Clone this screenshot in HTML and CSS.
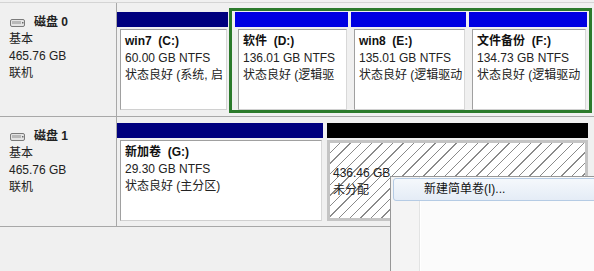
FILE: index.html
```html
<!DOCTYPE html>
<html lang="zh-CN">

<head>
    <meta charset="UTF-8">
    <title>磁盘管理</title>
    <link rel="stylesheet" href="styles.css">
</head>

<body>
    <div class="disk top">
        <div class="info">
            <div class="name">
                <svg class="drive" width="15" height="8" viewBox="0 0 15 8">
                    <rect x="0.5" y="0.5" width="14" height="7" rx="1.5" fill="#e4e4e4" stroke="#7a7a7a"/>
                    <rect x="2" y="2" width="9" height="3" fill="#b8b8b8"/>
                    <rect x="12" y="3" width="1.5" height="1.5" fill="#6a6a6a"/>
                </svg>
                磁盘 0
            </div>
            <div>基本</div>
            <div>465.76 GB</div>
            <div>联机</div>
        </div>
        <div class="parts">
            <div class="part w-c solo">
                <div class="bar navy"></div>
                <div class="box">
                    <b>win7&nbsp; (C:)</b>
                    <div>60.00 GB NTFS</div>
                    <div>状态良好 (系统, 启</div>
                </div>
            </div>
            <div class="selected">
                <div class="part w-d">
                    <div class="bar blue"></div>
                    <div class="box">
                        <b>软件&nbsp; (D:)</b>
                        <div>136.01 GB NTFS</div>
                        <div>状态良好 (逻辑驱</div>
                    </div>
                </div>
                <div class="part w-e">
                    <div class="bar blue"></div>
                    <div class="box">
                        <b>win8&nbsp; (E:)</b>
                        <div>135.01 GB NTFS</div>
                        <div>状态良好 (逻辑驱动</div>
                    </div>
                </div>
                <div class="part w-f">
                    <div class="bar blue"></div>
                    <div class="box">
                        <b>文件备份&nbsp; (F:)</b>
                        <div>134.73 GB NTFS</div>
                        <div>状态良好 (逻辑驱动</div>
                    </div>
                </div>
            </div>
        </div>
    </div>

    <div class="disk second">
        <div class="info">
            <div class="name">
                <svg class="drive" width="15" height="8" viewBox="0 0 15 8">
                    <rect x="0.5" y="0.5" width="14" height="7" rx="1.5" fill="#e4e4e4" stroke="#7a7a7a"/>
                    <rect x="2" y="2" width="9" height="3" fill="#b8b8b8"/>
                    <rect x="12" y="3" width="1.5" height="1.5" fill="#6a6a6a"/>
                </svg>
                磁盘 1
            </div>
            <div>基本</div>
            <div>465.76 GB</div>
            <div>联机</div>
        </div>
        <div class="parts">
            <div class="part w-g">
                <div class="bar navy"></div>
                <div class="box">
                    <b>新加卷&nbsp; (G:)</b>
                    <div>29.30 GB NTFS</div>
                    <div>状态良好 (主分区)</div>
                </div>
            </div>
            <div class="part w-u">
                <div class="bar black"></div>
                <div class="box free">
                    <div class="gap-line">&nbsp;</div>
                    <div>436.46 GB</div>
                    <div>未分配</div>
                </div>
            </div>
        </div>
    </div>

    <div class="menu">
        <div class="item">新建简单卷(I)...</div>
    </div>
</body>

</html>
```

FILE: styles.css
```css
* {
    margin: 0;
    box-sizing: border-box;
}

body {
    background: #f0f0f0;
    font-family: "Liberation Sans", "Noto Sans CJK SC", sans-serif;
    font-size: 12px;
    line-height: 17px;
    color: #000;
    overflow: hidden;
    height: 271px;
    position: relative;
}

.disk {
    display: flex;
    border-bottom: 1px solid #a8a8a8;
}

.disk.top {
    margin-top: 2px;
    border-top: 1px solid #d4d4d4;
    height: 115px;
}

.disk.second {
    height: 110px;
}

.info {
    width: 117px;
    border-right: 1px solid #a8a8a8;
    padding: 11px 0 0 9px;
    color: #222;
}

.name {
    font-weight: bold;
    display: flex;
    align-items: center;
    gap: 9px;
    padding-left: 1px;
}

.parts {
    display: flex;
    gap: 1px;
}

.top .parts {
    padding-top: 5px;
}

.second .parts {
    padding-top: 6px;
    gap: 4px;
}

.selected {
    display: flex;
    gap: 3px;
    border: 3px solid #2b7a2b;
    padding: 1px 2px 0 3px;
    height: 105px;
}

.part {
    display: flex;
    flex-direction: column;
    background: #f0f0f0;
}

.part.solo {
    padding-top: 4px;
}

.w-c { width: 111px; }
.w-d { width: 113px; }
.w-e { width: 115px; }
.w-f { width: 118px; }
.w-g { width: 206px; }
.w-u { width: 261px; }

.bar {
    height: 15px;
}

.navy { background: #00007e; }
.blue { background: #0000e2; }
.black { background: #000; }

.box {
    margin: 2px 1px 0 3px;
    height: 81px;
    background: #fff;
    border: 1px solid #a0a0a0;
    border-right-color: #d8d8d8;
    border-bottom-color: #d0d0d0;
    padding: 3px 0 0 4px;
    white-space: nowrap;
    overflow: hidden;
    color: #222;
}

.box b {
    display: block;
    color: #111;
}

.free {
    margin: 2px 0 0 0;
    border: 3px solid #c4c4c4;
    padding: 5px 0 0 3px;
    background: repeating-linear-gradient(135deg, #fff 0 6.5px, #8a8a8a 6.5px 7.5px);
}

.menu {
    position: absolute;
    left: 390px;
    top: 176px;
    width: 210px;
    height: 100px;
    border: 1px solid #979797;
    background: linear-gradient(90deg, #f4f4f4 0 28px, #e2e3e3 28px 29px, #fff 29px 30px, #fbfbfb 30px);
    padding: 1px 2px;
}

.item {
    height: 23px;
    border: 1px solid #b5cbe4;
    border-radius: 3px;
    background: linear-gradient(#f5f8fc, #e4ecf6);
    padding: 2px 0 0 30px;
    color: #111;
}
```
